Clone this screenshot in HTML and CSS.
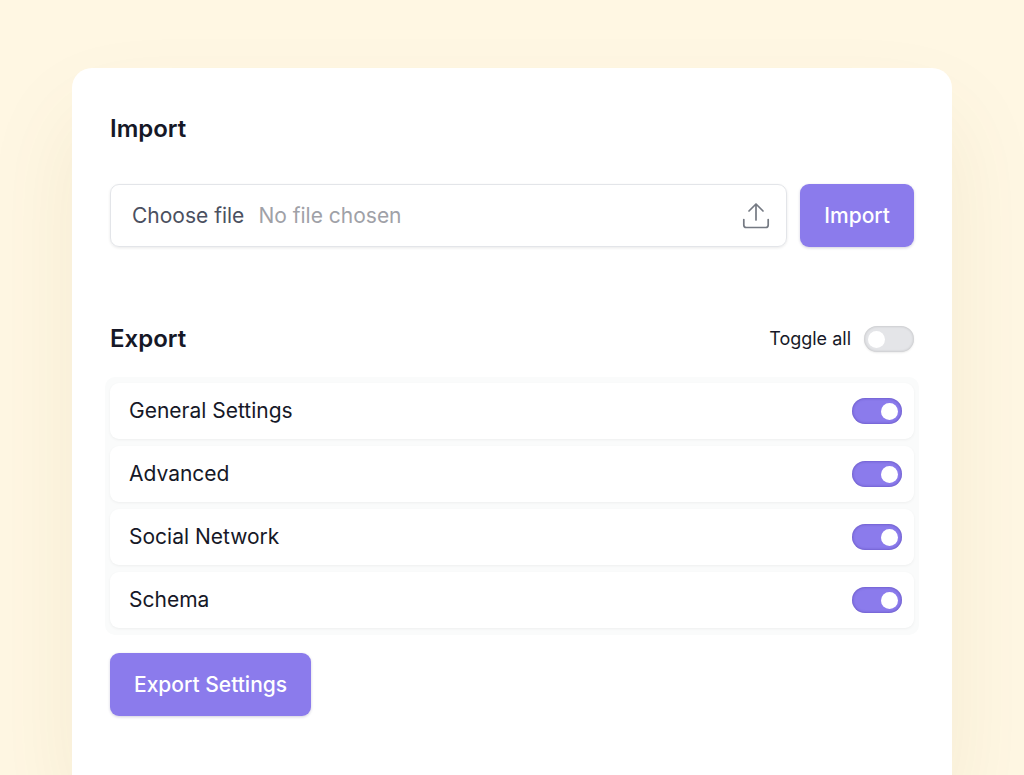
FILE: index.html
```html
<!DOCTYPE html>
<html lang="en">
<head>
<meta charset="utf-8">
<meta name="viewport" content="width=device-width, initial-scale=1">
<title>Import / Export</title>
<link rel="stylesheet" href="styles.css">
</head>
<body>
<main class="card">
  <section class="import">
    <h2 class="title">Import</h2>
    <form class="import-form">
      <label class="file-field">
        <span class="file-action">Choose file</span>
        <span class="file-name">No file chosen</span>
        <svg class="file-icon" viewBox="0 0 28 28" aria-hidden="true">
          <path d="M14 18V2M7 9L14 2L21 9M1.800 17.500V23Q1.800 25.500 4.300 25.500H23.700Q26.200 25.500 26.200 23V17.500"/>
        </svg>
        <input class="file-input" type="file">
      </label>
      <button class="button" type="button">Import</button>
    </form>
  </section>
  <section class="export">
    <header class="export-head">
      <h2 class="title">Export</h2>
      <label class="toggle-all">Toggle all <input class="switch" type="checkbox"></label>
    </header>
    <div class="options">
      <label class="option">General Settings <input class="switch" type="checkbox" checked></label>
      <label class="option">Advanced <input class="switch" type="checkbox" checked></label>
      <label class="option">Social Network <input class="switch" type="checkbox" checked></label>
      <label class="option">Schema <input class="switch" type="checkbox" checked></label>
    </div>
    <button class="button" type="button">Export Settings</button>
  </section>
</main>
</body>
</html>
```
FILE: styles.css
```css
* {
  box-sizing: border-box;
}

body {
  margin: 0;
  min-height: 100vh;
  display: flex;
  padding: 68px 72px 0;
  background: #fff7e3;
  color: #161827;
  font-family: Inter, "Liberation Sans", sans-serif;
  font-size: 21px;
  line-height: 32px;
}

.card {
  flex: 1;
  padding: 45px 38px 59px;
  background: #fff;
  border-radius: 20px 20px 0 0;
  box-shadow: 0 48px 96px rgba(120, 95, 20, 0.08);
}

.title {
  margin: 0;
  font-size: 24px;
  font-weight: 600;
}

.import-form {
  display: flex;
  gap: 13px;
  margin-top: 39px;
}

.file-field {
  position: relative;
  flex: 1;
  display: flex;
  align-items: center;
  gap: 14px;
  padding: 0 16px 0 21px;
  border: 1px solid #e3e5e9;
  border-radius: 9px;
  box-shadow: 0 1px 3px rgba(0, 0, 0, 0.09);
}

.file-action {
  color: #4b5060;
}

.file-name {
  flex: 1;
  color: #9fa1a7;
}

.file-icon {
  width: 28px;
  height: 28px;
  fill: none;
  stroke: #747982;
  stroke-width: 1.7;
  stroke-linecap: round;
  stroke-linejoin: round;
}

.file-input {
  position: absolute;
  inset: 0;
  width: 100%;
  opacity: 0;
  cursor: pointer;
}

.button {
  height: 63px;
  padding: 0 24px;
  border: 0;
  border-radius: 9px;
  background: #8b7bec;
  color: #fff;
  font: inherit;
  font-weight: 500;
  box-shadow: 0 1px 3px rgba(30, 20, 90, 0.2);
  cursor: pointer;
}

.export {
  margin-top: 76px;
}

.export-head {
  display: flex;
  align-items: center;
  justify-content: space-between;
}

.toggle-all {
  display: flex;
  align-items: center;
  gap: 13px;
  font-size: 18px;
}

.options {
  display: grid;
  gap: 7px;
  margin: 22px -5px 18px;
  padding: 6px 5px 7px;
  border-radius: 10px;
  background: #fafbfb;
}

.option {
  display: flex;
  align-items: center;
  justify-content: space-between;
  height: 56px;
  padding: 0 12px 0 19px;
  border-radius: 9px;
  background: #fff;
  box-shadow: 0 1px 3px rgba(0, 0, 0, 0.05);
}

.switch {
  appearance: none;
  display: flex;
  align-items: center;
  width: 50px;
  height: 26px;
  margin: 0;
  padding: 0 4px;
  border-radius: 13px;
  background: #e4e5e8;
  box-shadow: inset 0 0 3px rgba(0, 0, 0, 0.2), 0 1px 2px rgba(0, 0, 0, 0.08);
  cursor: pointer;
}

.switch::before {
  content: "";
  width: 17px;
  height: 17px;
  border-radius: 50%;
  background: #fff;
}

.switch:checked {
  justify-content: flex-end;
  background: #8b7bec;
  box-shadow: inset 0 0 3px rgba(40, 20, 130, 0.5);
}
```
